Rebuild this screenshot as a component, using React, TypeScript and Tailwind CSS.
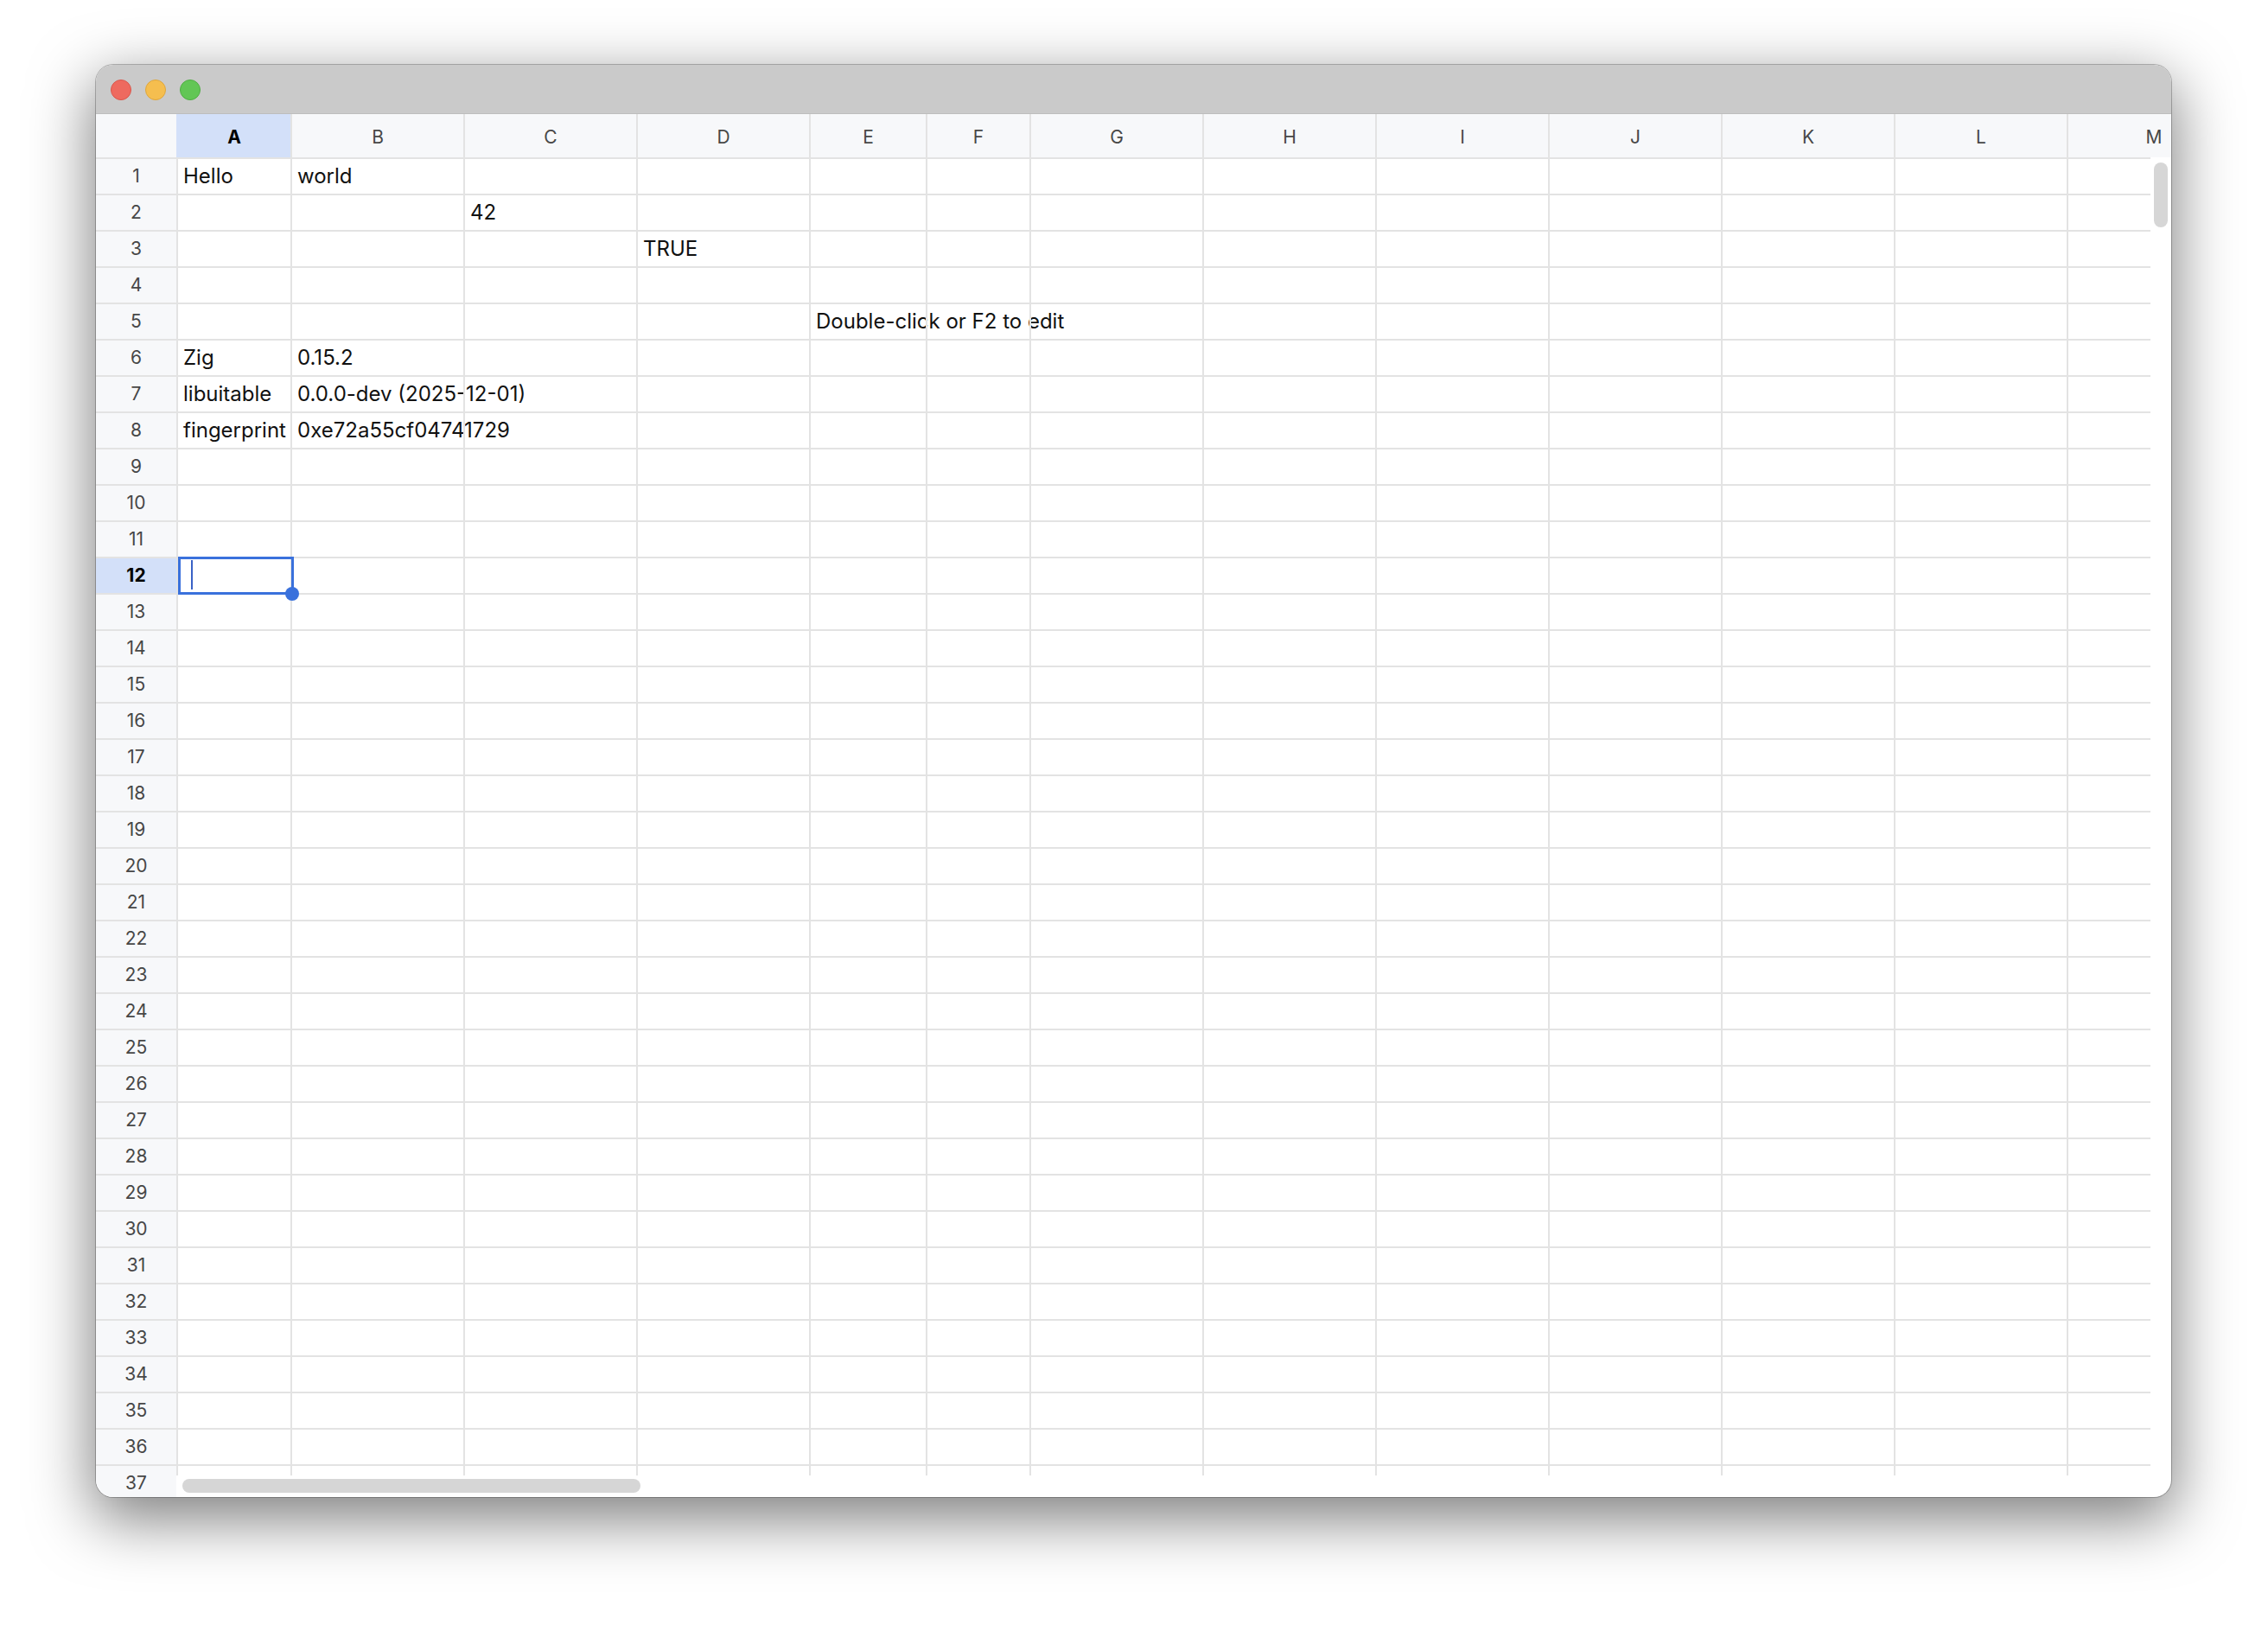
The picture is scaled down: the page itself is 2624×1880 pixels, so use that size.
import React from "react";

type Col = { key: string; w: string };

const COLS: Col[] = [
  { key: "A", w: "w-[132px]" },
  { key: "B", w: "w-[200px]" },
  { key: "C", w: "w-[200px]" },
  { key: "D", w: "w-[200px]" },
  { key: "E", w: "w-[135px]" },
  { key: "F", w: "w-[120px]" },
  { key: "G", w: "w-[200px]" },
  { key: "H", w: "w-[200px]" },
  { key: "I", w: "w-[200px]" },
  { key: "J", w: "w-[200px]" },
  { key: "K", w: "w-[200px]" },
  { key: "L", w: "w-[200px]" },
  { key: "M", w: "w-[200px]" },
];

const ROW_COUNT = 37;
const SELECTED_COL = "A";
const SELECTED_ROW = 12;

// Sheet contents keyed by cell address
const CELLS: Record<string, string> = {
  A1: "Hello",
  B1: "world",
  C2: "42",
  D3: "TRUE",
  E5: "Double-click or F2 to edit",
  A6: "Zig",
  B6: "0.15.2",
  A7: "libuitable",
  B7: "0.0.0-dev (2025-12-01)",
  A8: "fingerprint",
  B8: "0xe72a55cf04741729",
};

function TrafficLights() {
  return (
    <div className="flex items-center gap-[16px] pl-[17px] pt-[1px]">
      <span className="w-[24px] h-[24px] rounded-full bg-[#ee6a5f] border border-[#d9574c]" />
      <span className="w-[24px] h-[24px] rounded-full bg-[#f5be4f] border border-[#dea63c]" />
      <span className="w-[24px] h-[24px] rounded-full bg-[#62c655] border border-[#50ad44]" />
    </div>
  );
}

function ColumnHeader() {
  return (
    <div className="h-[50px] shrink-0 flex bg-[#f7f8fa] overflow-hidden">
      <div className="w-[93px] shrink-0" />
      {COLS.map((c) => {
        const sel = c.key === SELECTED_COL;
        return (
          <div
            key={c.key}
            className={
              sel
                ? `${c.w} shrink-0 border-l-2 border-[#d3e0f9] bg-[#d3e0f9] flex items-center justify-center pt-[3px] text-[21px] font-bold text-black`
                : `${c.w} shrink-0 border-l-2 border-[#e3e3e3] flex items-center justify-center pt-[3px] text-[21px] text-[#474747]`
            }
          >
            {c.key}
          </div>
        );
      })}
    </div>
  );
}

function RowHeaders() {
  const rows = Array.from({ length: ROW_COUNT }, (_, i) => i + 1);
  return (
    <div className="w-[93px] shrink-0 bg-[#f7f8fa] overflow-hidden flex flex-col">
      {rows.map((r) => {
        const sel = r === SELECTED_ROW;
        return (
          <div
            key={r}
            className={
              sel
                ? "h-[42px] shrink-0 border-t-2 border-[#e3e3e3] bg-[#d3e0f9] flex items-center justify-center text-[21px] font-bold text-black"
                : "h-[42px] shrink-0 border-t-2 border-[#e3e3e3] flex items-center justify-center text-[21px] text-[#474747]"
            }
          >
            {r}
          </div>
        );
      })}
    </div>
  );
}

function Cell({ col, row }: { col: Col; row: number }) {
  const addr = `${col.key}${row}`;
  const text = CELLS[addr];
  const active = col.key === SELECTED_COL && row === SELECTED_ROW;
  return (
    <div className={`${col.w} shrink-0 h-full relative border-l-2 border-[#e3e3e3] flex items-center pl-[6px]`}>
      {text && (
        <span className="whitespace-nowrap text-[24px] leading-none text-[#111]">{text}</span>
      )}
      {active && (
        <div className="absolute left-0 top-[-2px] w-[134px] h-[44px] border-[3px] border-[#3a71dc] z-10">
          {/* text caret of the inline editor */}
          <span className="absolute left-[12px] top-[1px] w-[2px] h-[34px] bg-[#3a62c6]" />
          {/* fill handle */}
          <span className="absolute right-[-9px] bottom-[-10px] w-[16px] h-[16px] rounded-full bg-[#3a71dc]" />
        </div>
      )}
    </div>
  );
}

function Grid() {
  const rows = Array.from({ length: ROW_COUNT }, (_, i) => i + 1);
  return (
    <div className="flex-1 min-w-0 overflow-hidden">
      <div className="flex flex-col w-max">
        {rows.map((r) => (
          <div key={r} className="h-[42px] shrink-0 border-t-2 border-[#e3e3e3] flex">
            {COLS.map((c) => (
              <Cell key={c.key} col={c} row={r} />
            ))}
          </div>
        ))}
      </div>
    </div>
  );
}

export default function App() {
  return (
    <div
      className="w-[2624px] h-[1880px] bg-white pt-[75px] pl-[111px]"
      style={{ fontFamily: "Inter, 'Noto Sans', 'Liberation Sans', sans-serif" }}
    >
      <div className="w-[2401px] h-[1657px] rounded-[20px] overflow-hidden bg-white flex flex-col ring-1 ring-black/25 shadow-[0_22px_70px_4px_rgba(0,0,0,0.5)]">
        <div className="h-[57px] shrink-0 bg-[#cacaca] border-b border-[#bdbdbd] flex items-center">
          <TrafficLights />
        </div>
        <ColumnHeader />
        <div className="flex-1 min-h-0 flex">
          <RowHeaders />
          <div className="flex-1 min-w-0 flex flex-col">
            <div className="flex-1 min-h-0 flex">
              <Grid />
              <div className="w-[24px] shrink-0 pt-[6px] pl-[4px]">
                <div className="w-[16px] h-[75px] rounded-full bg-[#d6d6d6]" />
              </div>
            </div>
            <div className="h-[25px] shrink-0 pl-[7px] pt-[4px]">
              <div className="w-[530px] h-[16px] rounded-full bg-[#d6d6d6]" />
            </div>
          </div>
        </div>
      </div>
    </div>
  );
}
